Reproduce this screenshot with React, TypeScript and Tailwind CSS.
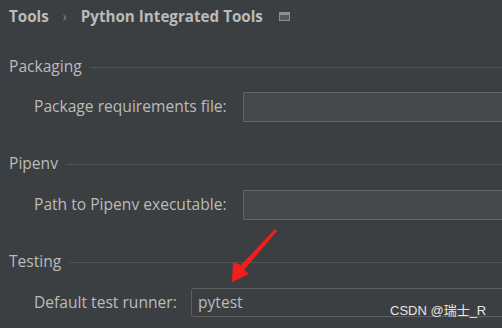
const font = { fontFamily: '"Open Sans", "Noto Sans", "Noto Sans CJK SC", sans-serif' };

function GroupTitle({ title, className }: { title: string; className?: string }) {
  return (
    <div className={["flex h-[20px] items-center pl-[9px]", className].join(" ")}>
      <span className="text-[15.6px] leading-none text-[#bbbbbb]">{title}</span>
      <div className="ml-[8px] h-px flex-1 bg-[#515355]" />
    </div>
  );
}

function FieldRow({
  label,
  labelWidth,
  value,
  combo,
  className,
}: {
  label: string;
  labelWidth: string;
  value?: string;
  combo?: boolean;
  className?: string;
}) {
  return (
    <div className={["-mr-[4px] flex items-center pl-[34px]", className].join(" ")}>
      <div className={[labelWidth, "shrink-0 text-[15.6px] leading-none text-[#bbbbbb]"].join(" ")}>
        {label}
      </div>
      <div
        className={[
          "flex h-full flex-1 items-center border pl-[6px] text-[15.6px] text-[#bbbbbb]",
          combo ? "rounded-[3px] border-[#5e6060] bg-[#3c3f41]" : "border-[#646464] bg-[#45494a]",
        ].join(" ")}
      >
        {value}
      </div>
    </div>
  );
}

export default function App() {
  return (
    <div className="relative h-[328px] w-[502px] overflow-hidden bg-[#3c3f41]" style={font}>
      <div className="flex h-[33px] items-center pl-[9px]">
        <span className="text-[15.2px] font-bold text-[#bbbbbb]">Tools</span>
        <span className="mx-[14px] text-[13px] text-[#8c8c8c]">›</span>
        <span className="text-[15.2px] font-bold text-[#bbbbbb]">Python Integrated Tools</span>
        <svg width="11" height="9" viewBox="0 0 11 9" className="ml-[16px]">
          <rect x="0.5" y="0.5" width="10" height="8" fill="#55595b" stroke="#8c8f91" />
          <rect x="1" y="1" width="9" height="2" fill="#8c8f91" />
        </svg>
      </div>

      <GroupTitle title="Packaging" className="mt-[24px]" />
      <FieldRow
        label="Package requirements file:"
        labelWidth="w-[209px]"
        className="mt-[15px] h-[30px]"
      />

      <GroupTitle title="Pipenv" className="mt-[32px]" />
      <FieldRow
        label="Path to Pipenv executable:"
        labelWidth="w-[209px]"
        className="mt-[16px] h-[30px]"
      />

      <GroupTitle title="Testing" className="mt-[32px]" />
      <FieldRow
        label="Default test runner:"
        labelWidth="w-[157px]"
        value="pytest"
        combo
        className="mt-[16px] h-[29px]"
      />

      <svg className="absolute left-0 top-0" width="502" height="328">
        <path d="M275,229 L241,265 L233,262 L232,282 L249,274 L244,270 L277,231 Z" fill="#f21d1d" />
      </svg>
      <span
        className="absolute left-[390px] top-[301px] text-[13px] text-[#e6e6e6]"
        style={{ fontFamily: '"Liberation Sans", "Noto Sans CJK SC", sans-serif' }}
      >
        CSDN @瑞士_R
      </span>
    </div>
  );
}
